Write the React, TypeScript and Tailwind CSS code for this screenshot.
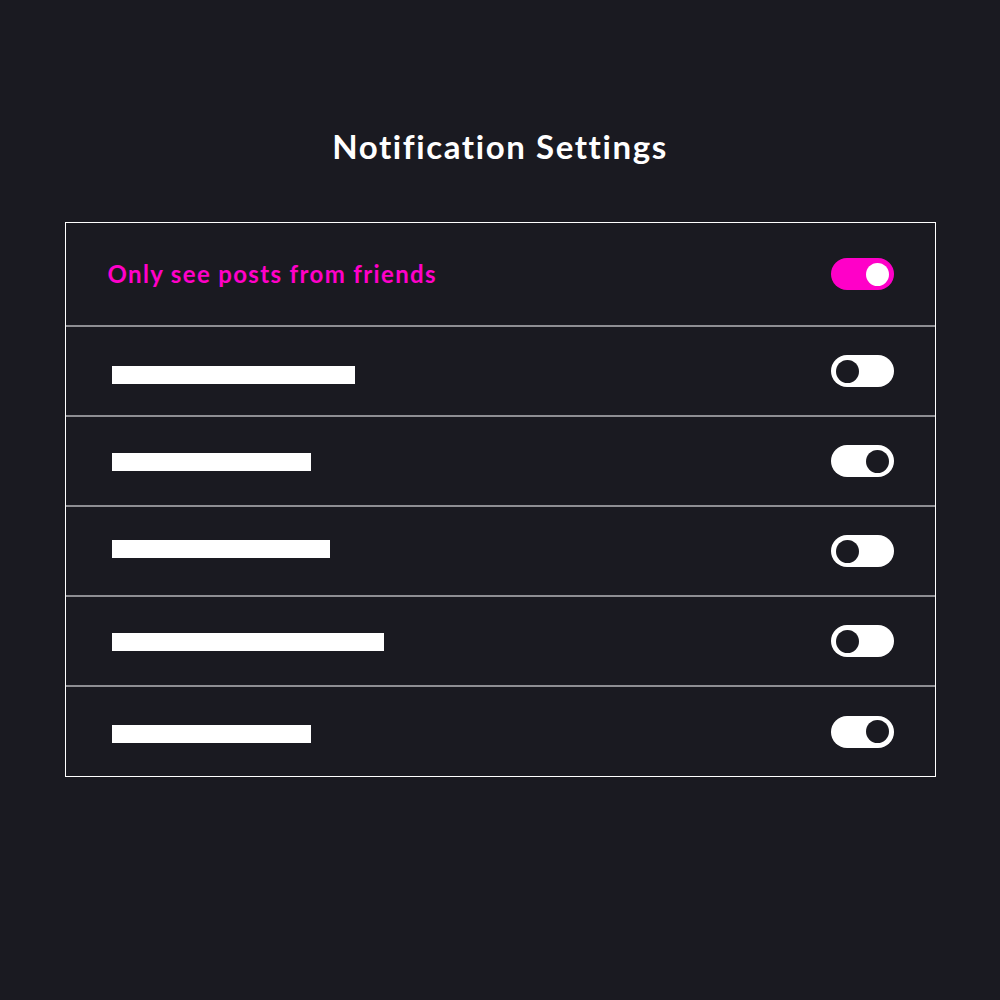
import React from "react";

type Row = { label?: string; bar?: number; shift?: string; on: boolean; accent?: boolean };

const rows: Row[] = [
  { label: "Only see posts from friends", on: true, accent: true },
  { bar: 243, shift: "mt-[8px]", on: false },
  { bar: 199, shift: "mt-[2px]", on: true },
  { bar: 218, shift: "-mt-[4px]", on: false },
  { bar: 272, shift: "mt-[2px]", on: false },
  { bar: 199, shift: "mt-[4px]", on: true },
];

function Toggle({ on, accent }: { on: boolean; accent?: boolean }) {
  if (accent) {
    return (
      <div className="flex h-[32px] w-[63px] items-center justify-end rounded-full bg-[#ff00c8] pr-[5px]">
        <div className="h-[23px] w-[23px] rounded-full bg-white" />
      </div>
    );
  }
  return (
    <div
      className={
        on
          ? "flex h-[32px] w-[63px] items-center justify-end rounded-full bg-white pr-[5px]"
          : "flex h-[32px] w-[63px] items-center justify-start rounded-full bg-white pl-[5px]"
      }
    >
      <div className="h-[23px] w-[23px] rounded-full bg-[#1a1a21]" />
    </div>
  );
}

export default function App() {
  return (
    <div className="flex min-h-[1000px] w-full flex-col items-center bg-[#1a1a21] pt-[124px] font-['Lato',sans-serif]">
      <h1 className="text-[33px] font-bold leading-[44px] tracking-[1.6px] text-white">
        Notification Settings
      </h1>
      <div className="mt-[54px] w-[871px] border border-white">
        {rows.map((row, i) => (
          <div
            key={i}
            className={
              i === 0
                ? "flex h-[104px] items-center justify-between border-b-2 border-[#8e8e93] pl-[42px] pr-[41px]"
                : i === rows.length - 1
                ? "flex h-[89px] items-center justify-between pl-[46px] pr-[41px]"
                : "flex h-[90px] items-center justify-between border-b-2 border-[#8e8e93] pl-[46px] pr-[41px]"
            }
          >
            {row.label ? (
              <span className="text-[24px] font-bold tracking-[1.35px] text-[#ff00c8]">
                {row.label}
              </span>
            ) : (
              <div className={`h-[18px] bg-white ${row.shift}`} style={{ width: row.bar }} />
            )}
            <Toggle on={row.on} accent={row.accent} />
          </div>
        ))}
      </div>
    </div>
  );
}
